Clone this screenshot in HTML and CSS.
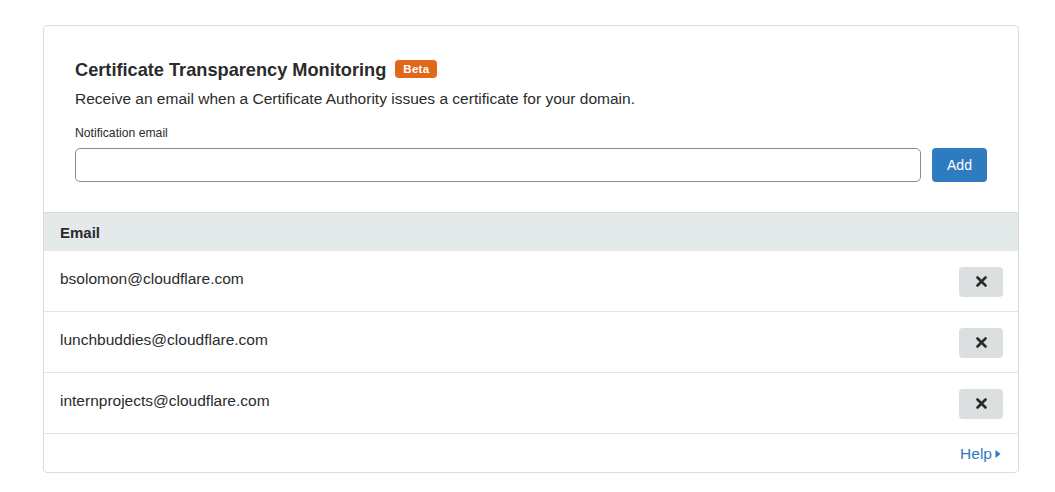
FILE: index.html
```html
<!DOCTYPE html>
<html>
<head>
<meta charset="utf-8">
<link rel="stylesheet" href="styles.css">
</head>
<body>
<div class="card">
  <div class="top">
    <h2 class="title">Certificate Transparency Monitoring <span class="badge">Beta</span></h2>
    <p class="desc">Receive an email when a Certificate Authority issues a certificate for your domain.</p>
    <label class="label">Notification email</label>
    <div class="form-row">
      <input class="input" type="text">
      <button class="btn-add">Add</button>
    </div>
  </div>
  <div class="thead">Email</div>
  <div class="row"><span>bsolomon@cloudflare.com</span><button class="btn-x"><svg width="11" height="11" viewBox="0 0 11 11"><path d="M1.5 1.5 L9.5 9.5 M9.5 1.5 L1.5 9.5" stroke="#2b2b2b" stroke-width="2.6" stroke-linecap="round"/></svg></button></div>
  <div class="row"><span>lunchbuddies@cloudflare.com</span><button class="btn-x"><svg width="11" height="11" viewBox="0 0 11 11"><path d="M1.5 1.5 L9.5 9.5 M9.5 1.5 L1.5 9.5" stroke="#2b2b2b" stroke-width="2.6" stroke-linecap="round"/></svg></button></div>
  <div class="row"><span>internprojects@cloudflare.com</span><button class="btn-x"><svg width="11" height="11" viewBox="0 0 11 11"><path d="M1.5 1.5 L9.5 9.5 M9.5 1.5 L1.5 9.5" stroke="#2b2b2b" stroke-width="2.6" stroke-linecap="round"/></svg></button></div>
  <div class="foot"><a class="help">Help <svg width="6" height="10" viewBox="0 0 6 10"><path d="M0.5 1 L5.5 5 L0.5 9 Z" fill="#2f7bbf"/></svg></a></div>
</div>
</body>
</html>
```
FILE: styles.css
```css
* { box-sizing: border-box; }
body {
  margin: 0;
  padding: 25px 36px 0 43px;
  font-family: "Liberation Sans", Arial, sans-serif;
  color: #2b2b2b;
  background: #fff;
}
.card {
  border: 1px solid #dcdcdc;
  border-radius: 4px;
  width: 976px;
  height: 448px;
  overflow: hidden;
}
.top {
  padding: 33px 31px 30px 31px;
}
.title {
  margin: 0;
  font-size: 18.2px;
  font-weight: bold;
  color: #2b2b2b;
  line-height: 22px;
  display: flex;
  align-items: center;
  gap: 9px;
}
.badge {
  background: #e1681b;
  color: #fff;
  font-size: 11.5px;
  font-weight: bold;
  padding: 0 8px;
  line-height: 18px;
  border-radius: 4px;
  letter-spacing: 0.3px;
  margin-top: -3px;
}
.desc {
  margin: 8px 0 0;
  font-size: 15.5px;
  line-height: 20px;
}
.label {
  display: block;
  margin-top: 17px;
  font-size: 12.2px;
  line-height: 15px;
}
.form-row {
  display: flex;
  gap: 11px;
  margin-top: 7px;
}
.input {
  flex: 1;
  height: 34px;
  border: 1px solid #8a8a8a;
  border-radius: 5px;
  margin: 0;
}
.btn-add {
  width: 55px;
  height: 34px;
  background: #2f7bbf;
  color: #fff;
  border: none;
  border-radius: 4px;
  font-family: inherit;
  font-size: 14px;
}
.thead {
  background: #e4e9e9;
  border-top: 1px solid #d8dcdc;
  height: 39px;
  display: flex;
  align-items: center;
  padding-left: 16px;
  font-weight: bold;
  font-size: 15px;
}
.row {
  height: 61px;
  border-bottom: 1px solid #e4e4e4;
  display: flex;
  align-items: center;
  justify-content: space-between;
  padding: 0 15px 0 16px;
  font-size: 15.5px;
}
.row span { margin-top: -5px; }
.btn-x {
  width: 44px;
  height: 30px;
  margin-top: 1px;
  background: #dcdfe0;
  border: none;
  border-radius: 4px;
  display: flex;
  align-items: center;
  justify-content: center;
  padding: 0;
}
.foot {
  height: 38px;
  display: flex;
  align-items: center;
  justify-content: flex-end;
  padding-right: 17px;
}
.help {
  color: #2f7bbf;
  font-size: 15.5px;
  display: flex;
  align-items: center;
  gap: 3px;
  margin-top: 2px;
}
```
